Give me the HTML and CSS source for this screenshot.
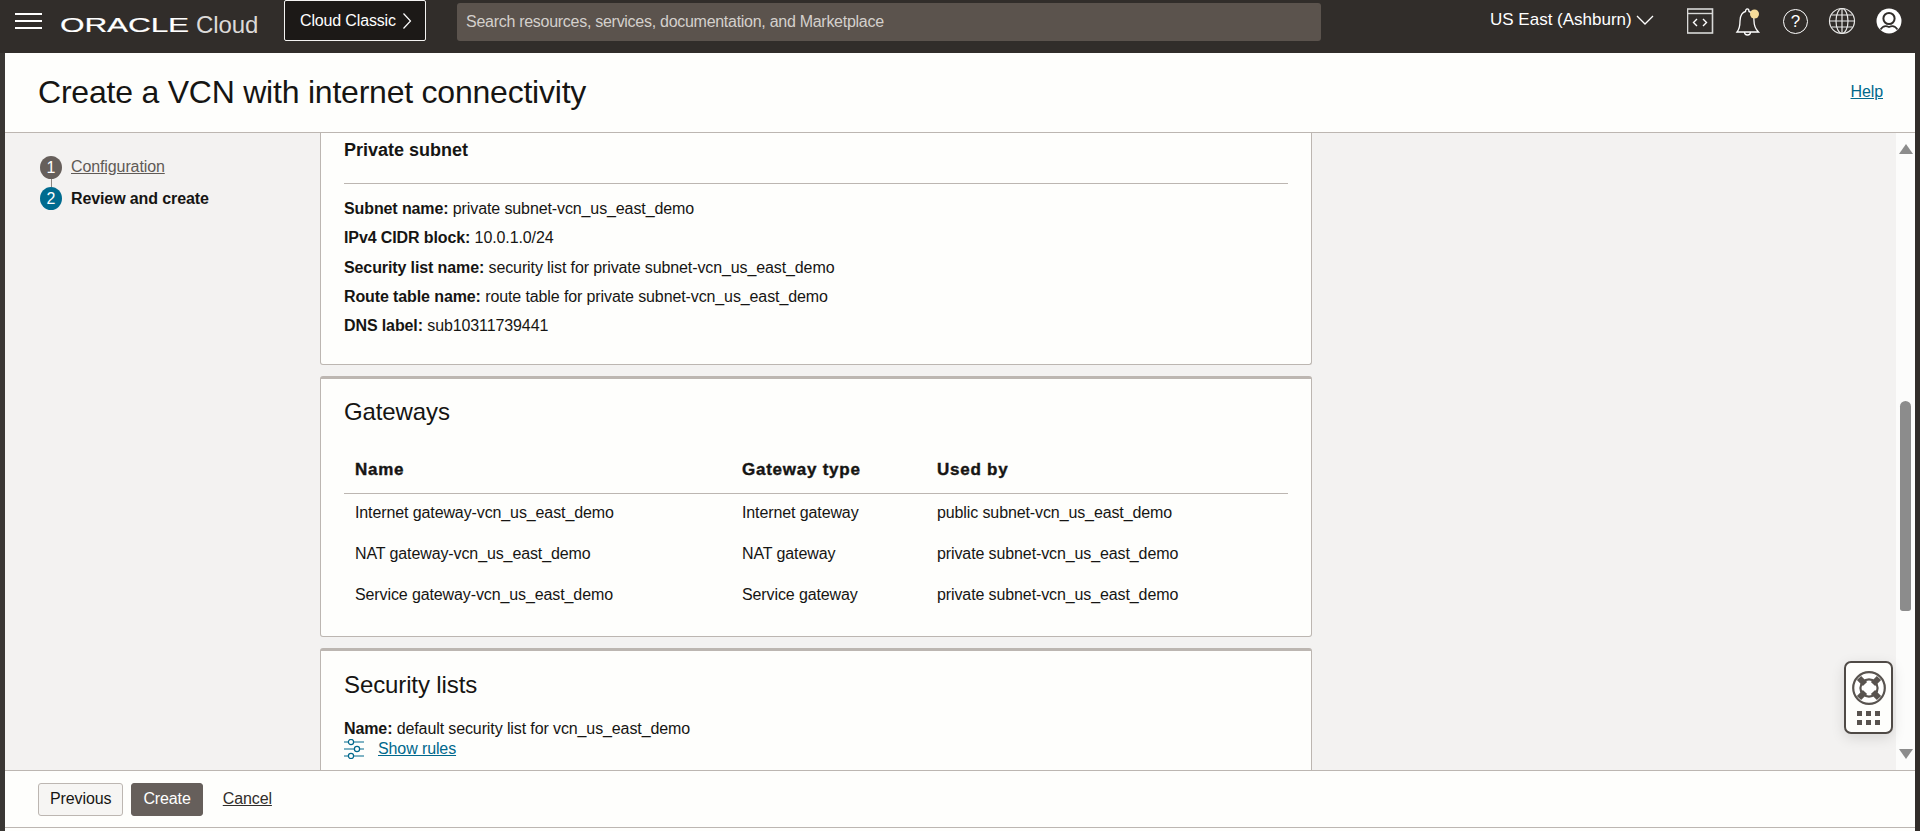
FILE: index.html
```html
<!DOCTYPE html>
<html lang="en">
<head>
  <meta charset="UTF-8">
  <meta name="viewport" content="width=device-width, initial-scale=1.0">
  <title>Create a VCN with internet connectivity</title>
  <link rel="stylesheet" href="styles.css">
</head>
<body>
  <header class="topbar">
    <div class="hamburger"><span></span><span></span><span></span></div>
    <div class="logo">
      <svg class="logo-word" width="130" height="26" viewBox="0 0 130 26"><text x="0" y="20" textLength="129" lengthAdjust="spacingAndGlyphs">ORACLE</text></svg>
      <span class="logo-cloud">Cloud</span>
    </div>
    <button class="classic">Cloud Classic
      <svg width="10" height="18" viewBox="0 0 10 18"><path d="M1.5 1.5 L8.5 9 L1.5 16.5" fill="none" stroke="#fff" stroke-width="1.2"/></svg>
    </button>
    <div class="search">Search resources, services, documentation, and Marketplace</div>
    <div class="region">US East (Ashburn)
      <svg width="18" height="10" viewBox="0 0 18 10"><path d="M1 1 L9 9 L17 1" fill="none" stroke="#fff" stroke-width="1.3"/></svg>
    </div>
    <div class="tools">
      <svg width="28" height="28" viewBox="1 0 28 28">
        <rect x="1.5" y="2" width="25" height="24" fill="none" stroke="#d9d9d8" stroke-width="1.6"/>
        <path d="M2 6.5 H26" stroke="#d9d9d8" stroke-width="1.4"/>
        <path d="M11 12 L7.5 15.5 L11 19 M17 12 L20.5 15.5 L17 19" fill="none" stroke="#fff" stroke-width="1.4"/>
      </svg>
      <svg width="28" height="30" viewBox="1.5 0 28 30">
        <path d="M3.5 26 C6 23 6.5 20 6.5 15 C6.5 9 9.5 6 12 5.5 C12 2 15.5 2 15.5 5.5 C18 6 20.5 9 20.5 15 C20.5 20 22 23 25 26 Z" fill="none" stroke="#fff" stroke-width="1.3"/>
        <path d="M11 26 C11 30 17 30 17 26" fill="none" stroke="#fff" stroke-width="1.3"/>
        <circle cx="21" cy="8" r="4.5" fill="#f6dc9a"/>
      </svg>
      <div class="help-circle">?</div>
      <svg width="28" height="28" viewBox="0 0 28 28" fill="none" stroke="#e8e8e7" stroke-width="1.2">
        <circle cx="14" cy="14" r="12.5"/>
        <ellipse cx="14" cy="14" rx="6" ry="12.5"/>
        <path d="M14 1.5 V26.5 M1.5 14 H26.5 M3.5 8 H24.5 M3.5 20 H24.5"/>
      </svg>
      <svg width="26" height="26" viewBox="0 0 26 26">
        <circle cx="13" cy="13" r="12.5" fill="#fff"/>
        <circle cx="13" cy="10.5" r="5.6" fill="#fff" stroke="#312d2a" stroke-width="2"/>
        <path d="M4.5 21.5 C7 17.5 10 17.5 13 19 C16 17.5 19 17.5 21.5 21.5" fill="none" stroke="#312d2a" stroke-width="1.6"/>
      </svg>
    </div>
  </header>

  <div class="shell">
    <div class="titlebar">
      <h1>Create a VCN with internet connectivity</h1>
      <a class="link" href="#">Help</a>
    </div>

    <main class="main">
      <nav class="steps">
        <div class="step"><span class="dot">1</span><a class="step-link" href="#">Configuration</a></div>
        <div class="step-line"></div>
        <div class="step"><span class="dot dot-current">2</span><strong>Review and create</strong></div>
      </nav>

      <div class="content">
        <section class="card card-cut">
          <h3>Private subnet</h3>
          <hr class="rule">
          <div class="facts">
            <div><b>Subnet name:</b> private subnet-vcn_us_east_demo</div>
            <div><b>IPv4 CIDR block:</b> 10.0.1.0/24</div>
            <div><b>Security list name:</b> security list for private subnet-vcn_us_east_demo</div>
            <div><b>Route table name:</b> route table for private subnet-vcn_us_east_demo</div>
            <div><b>DNS label:</b> sub10311739441</div>
          </div>
        </section>

        <section class="card card-gateways">
          <h2>Gateways</h2>
          <table class="gw">
            <thead>
              <tr><th class="col-name">Name</th><th class="col-type">Gateway type</th><th>Used by</th></tr>
            </thead>
            <tbody>
              <tr><td>Internet gateway-vcn_us_east_demo</td><td>Internet gateway</td><td>public subnet-vcn_us_east_demo</td></tr>
              <tr><td>NAT gateway-vcn_us_east_demo</td><td>NAT gateway</td><td>private subnet-vcn_us_east_demo</td></tr>
              <tr><td>Service gateway-vcn_us_east_demo</td><td>Service gateway</td><td>private subnet-vcn_us_east_demo</td></tr>
            </tbody>
          </table>
        </section>

        <section class="card card-lists">
          <h2>Security lists</h2>
          <div class="list-name"><b>Name:</b> default security list for vcn_us_east_demo</div>
          <div class="rules">
            <svg width="20" height="20" viewBox="0 0 20 20" fill="none" stroke="#00688c" stroke-width="1.2">
              <path d="M0 3 H4 M10 3 H20 M0 10 H10 M16 10 H20 M0 17 H4 M10 17 H20"/>
              <circle cx="7" cy="3" r="2.6"/><circle cx="13" cy="10" r="2.6"/><circle cx="7" cy="17" r="2.6"/>
            </svg>
            <a class="link" href="#">Show rules</a>
          </div>
        </section>
      </div>

      <div class="gutter"></div>

      <div class="scrollbar">
        <span class="arrow arrow-up"></span>
        <span class="thumb"></span>
        <span class="arrow arrow-down"></span>
      </div>

      <div class="helper">
        <svg width="36" height="36" viewBox="0 0 36 36">
          <circle cx="18" cy="18" r="13" fill="#fff"/>
          <path d="M8 8 L14 14 M28 8 L22 14 M8 28 L14 22 M28 28 L22 22" stroke="#58534f" stroke-width="6"/>
          <circle cx="18" cy="18" r="15.8" fill="none" stroke="#58534f" stroke-width="2.2"/>
          <circle cx="18" cy="18" r="8.6" fill="none" stroke="#58534f" stroke-width="2.2"/>
        </svg>
        <div class="helper-dots"><i></i><i></i><i></i><i></i><i></i><i></i></div>
      </div>
    </main>

    <footer class="actions">
      <button class="btn">Previous</button>
      <button class="btn btn-primary">Create</button>
      <a class="cancel" href="#">Cancel</a>
    </footer>
    <div class="under"></div>
  </div>
</body>
</html>
```

FILE: styles.css
```css
* {
  box-sizing: border-box;
}

html, body {
  height: 100%;
}

body {
  margin: 0;
  overflow: hidden;
  font-family: "Liberation Sans", Arial, sans-serif;
  font-size: 16px;
  line-height: 20px;
  letter-spacing: -0.11px;
  color: #161513;
  background: #fcfbfa;
}

/* top bar */
.topbar {
  display: flex;
  align-items: center;
  height: 53px;
  padding-right: 18px;
  background: #312d2a;
  color: #fff;
}

.hamburger {
  display: flex;
  flex-direction: column;
  gap: 5px;
  width: 27px;
  margin: -11px 0 0 15px;
}

.hamburger span {
  display: block;
  height: 2px;
  background: #fff;
}

.logo {
  display: flex;
  align-items: center;
  width: 223px;
  margin: -3px 0 0 18px;
}

.logo-word {
  display: block;
  font-size: 21px;
  fill: #fff;
  stroke: #fff;
  stroke-width: 0.15px;
}

.logo-cloud {
  margin-left: 6px;
  font-size: 24px;
  line-height: 28px;
  color: #dcdad8;
}

.classic {
  display: flex;
  align-items: center;
  gap: 6px;
  width: 142px;
  height: 41px;
  margin: -12px 0 0 1px;
  padding: 0 0 0 15px;
  font-family: inherit;
  font-size: 16px;
  letter-spacing: -0.15px;
  color: #fff;
  background: #1c1917;
  border: 1px solid #f4f3f2;
  border-radius: 2px;
}

.search {
  width: 864px;
  height: 38px;
  margin: -10px 0 0 31px;
  padding: 0 9px;
  font-size: 16px;
  line-height: 38px;
  letter-spacing: -0.28px;
  color: #d4d0cc;
  background: #5b534d;
  border-radius: 3px;
}

.region {
  display: flex;
  align-items: center;
  gap: 4px;
  margin: -13px 0 0 169px;
  font-size: 17px;
  letter-spacing: 0;
}

.tools {
  display: flex;
  align-items: center;
  gap: 20px;
  margin: -11px 0 0 auto;
}

.help-circle {
  width: 25px;
  height: 25px;
  font-size: 17px;
  line-height: 23px;
  text-align: center;
  border: 1.3px solid #fff;
  border-radius: 50%;
}

/* page frame */
.shell {
  display: flex;
  flex-direction: column;
  height: 778px;
  margin: 0;
  border-left: 5px solid #3a3734;
  border-right: 5px solid #312d2a;
}

.titlebar {
  display: flex;
  align-items: center;
  justify-content: space-between;
  height: 80px;
  padding: 0 32px 2px 33px;
  background: #fefefc;
  border-bottom: 1px solid #bcb6b1;
}

.titlebar h1 {
  margin: 0;
  font-size: 32px;
  font-weight: 400;
  line-height: 40px;
  letter-spacing: -0.22px;
}

.link {
  color: #00688c;
}

.main {
  position: relative;
  display: grid;
  grid-template-columns: 315px 992px 1fr 19px;
  height: 638px;
  overflow: hidden;
  background: #f3f2f1;
  border-bottom: 1px solid #bcb6b1;
}

/* steps */
.steps {
  padding: 23px 0 0 35px;
}

.step {
  display: flex;
  align-items: center;
  gap: 9px;
  height: 23px;
}

.step-line {
  width: 1px;
  height: 8px;
  margin-left: 11px;
  background: #8a847f;
}

.dot {
  width: 22px;
  height: 23px;
  color: #fff;
  line-height: 23px;
  text-align: center;
  background: #665f5b;
  border-radius: 50%;
}

.dot-current {
  background: #006b8f;
}

.step-link {
  margin-top: -1px;
  color: #5f5a56;
}

/* cards */
.content {
  display: flex;
  flex-direction: column;
  gap: 11px;
}

.card {
  flex: none;
  padding: 0 23px;
  background: #fefefc;
  border: 1px solid #bcb6b1;
  border-top-width: 3px;
  border-radius: 3px;
}

.card-cut {
  padding-top: 7px;
  padding-bottom: 28px;
  border-top: 0;
  border-radius: 0 0 3px 3px;
}

.card-gateways {
  padding-top: 18px;
  padding-bottom: 20px;
}

.card-lists {
  padding-top: 19px;
  padding-bottom: 40px;
}

.card h3 {
  margin: 0;
  font-size: 18px;
  line-height: 20px;
  letter-spacing: 0;
}

.card h2 {
  margin: 0;
  font-size: 24px;
  font-weight: 400;
  line-height: 30px;
}

.rule {
  height: 1px;
  margin: 23px 0 15px;
  background: #bcb6b1;
  border: 0;
}

.facts {
  display: flex;
  flex-direction: column;
  gap: 9.25px;
}

.gw {
  width: 100%;
  margin-top: 21px;
  border-collapse: collapse;
}

.gw th {
  height: 45px;
  padding: 0 11px;
  font-size: 17px;
  letter-spacing: 0.75px;
  text-align: left;
  -webkit-text-stroke: 0.4px #161513;
  border-bottom: 1px solid #bcb6b1;
}

.gw td {
  height: 41px;
  padding: 0 11px 2px;
}

.col-name {
  width: 387px;
}

.col-type {
  width: 195px;
}

.list-name {
  margin-top: 19px;
}

.rules {
  display: flex;
  align-items: center;
  gap: 14px;
}

/* fake scrollbar */
.gutter {
  min-width: 0;
}

.scrollbar {
  display: flex;
  flex-direction: column;
  align-items: center;
  background: #fcfcfb;
  padding: 11px 0 10px;
}

.arrow {
  width: 0;
  height: 0;
  border-left: 7px solid transparent;
  border-right: 7px solid transparent;
}

.arrow-up {
  border-bottom: 10px solid #8c8c8c;
}

.arrow-down {
  margin-top: 138px;
  border-top: 10px solid #8c8c8c;
}

.thumb {
  width: 11px;
  height: 210px;
  margin-top: 247px;
  background: #8c8c8c;
  border-radius: 6px 6px 3px 3px;
}

/* floating helper */
.helper {
  position: absolute;
  top: 528px;
  right: 22px;
  display: flex;
  flex-direction: column;
  align-items: center;
  gap: 5px;
  width: 49px;
  height: 73px;
  padding-top: 7px;
  background: #fefefc;
  border: 2px solid #4f4a46;
  border-radius: 7px;
  box-shadow: 0 4px 14px rgba(0, 0, 0, 0.12);
}

.helper-dots {
  display: grid;
  grid-template-columns: repeat(3, 5px);
  gap: 4px;
}

.helper-dots i {
  display: block;
  height: 5px;
  background: #58534f;
}

/* footer buttons */
.actions {
  display: flex;
  align-items: center;
  gap: 8px;
  height: 57px;
  padding: 0 0 0 33px;
  background: #fefefc;
  border-bottom: 1px solid #bcb6b1;
}

.btn {
  height: 33px;
  padding: 0 11px;
  font-family: inherit;
  font-size: 16px;
  letter-spacing: -0.11px;
  color: #161513;
  background: #f6f5f3;
  border: 1px solid #bcb6b1;
  border-radius: 3px;
}

.btn-primary {
  color: #fff;
  background: #665f5b;
  border-color: #665f5b;
}

.cancel {
  margin-left: 12px;
  color: #312d2a;
}

.under {
  flex: 1;
  background: #fefefc;
}
```
